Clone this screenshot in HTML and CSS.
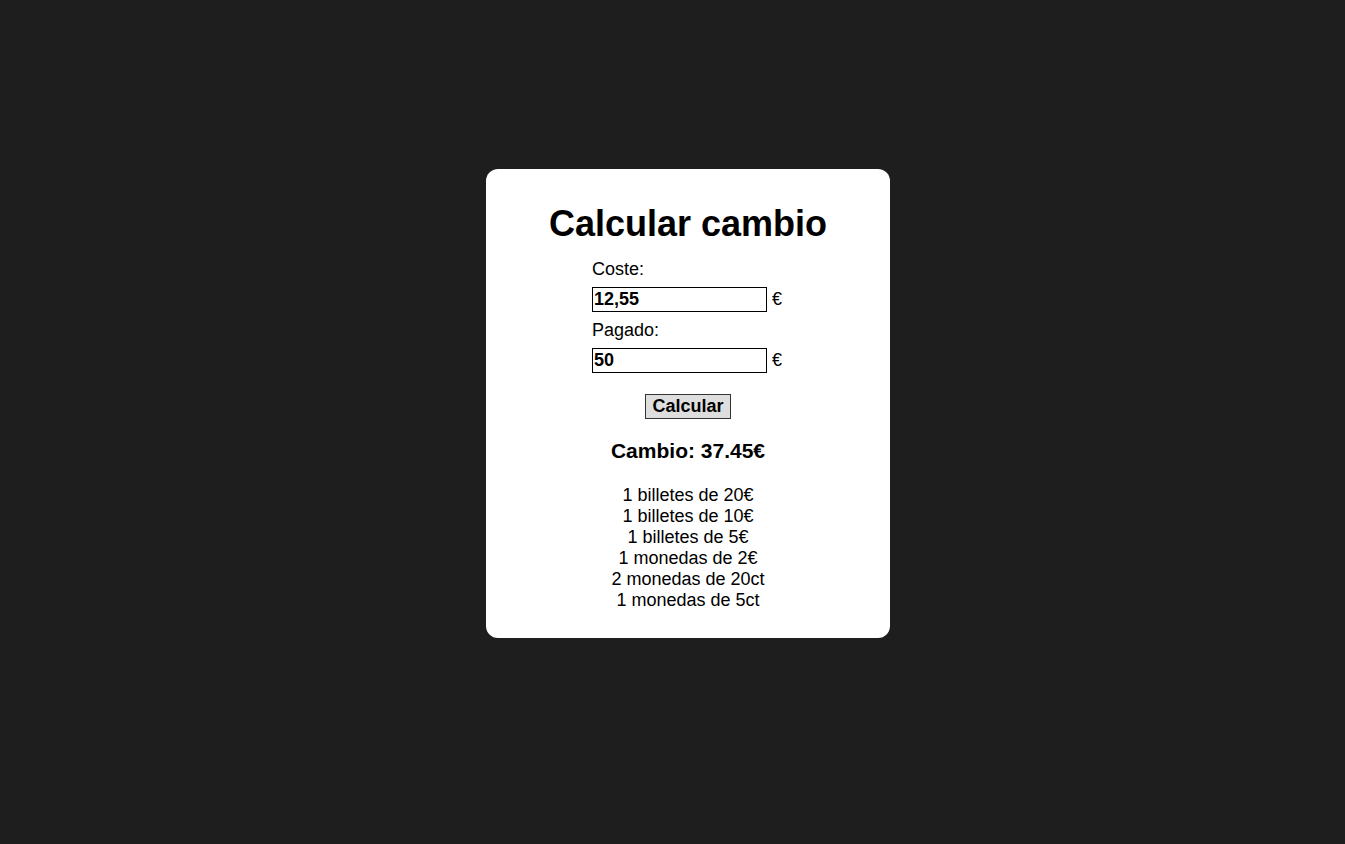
FILE: index.html
```html
<!DOCTYPE html>
<html lang="es">
<head>
<meta charset="utf-8">
<title>Calcular cambio</title>
<link rel="stylesheet" href="styles.css">
</head>
<body>
<main class="card">
  <h1 class="title">Calcular cambio</h1>
  <form class="form">
    <label class="label" for="coste">Coste:</label>
    <div class="field field-first"><input class="input" id="coste" type="text" value="12,55"> €</div>
    <label class="label label-second" for="pagado">Pagado:</label>
    <div class="field field-second"><input class="input" id="pagado" type="text" value="50"> €</div>
  </form>
  <button class="button" type="button">Calcular</button>
  <h3 class="result">Cambio: 37.45€</h3>
  <div class="list">
    <div>1 billetes de 20€</div>
    <div>1 billetes de 10€</div>
    <div>1 billetes de 5€</div>
    <div>1 monedas de 2€</div>
    <div>2 monedas de 20ct</div>
    <div>1 monedas de 5ct</div>
  </div>
</main>
</body>
</html>
```
FILE: styles.css
```css
html, body {
  margin: 0;
  padding: 0;
}
body {
  background: #1e1e1e;
  font-family: "Liberation Sans", Arial, sans-serif;
  font-size: 18px;
  color: #000;
  display: flex;
  flex-direction: column;
  align-items: center;
  padding-top: 169px;
  min-height: 844px;
  box-sizing: border-box;
}
.card {
  width: 404px;
  box-sizing: border-box;
  background: #fff;
  border-radius: 12px;
  padding: 34px 0 27px;
  display: flex;
  flex-direction: column;
  align-items: center;
  margin-left: 31px;
}
.title {
  margin: 0;
  font-size: 36px;
  font-weight: bold;
  line-height: 41px;
  text-align: center;
}
.form {
  margin: 15px 0 0;
  display: flex;
  flex-direction: column;
  align-items: flex-start;
  width: 192px;
}
.label {
  line-height: 21px;
  height: 21px;
}
.label-second {
  margin-top: 8px;
}
.field {
  height: 25px;
  line-height: 25px;
  display: flex;
  align-items: center;
  gap: 5px;
}
.field-first {
  margin-top: 7px;
}
.field-second {
  margin-top: 7px;
}
.input {
  width: 175px;
  height: 25px;
  box-sizing: border-box;
  border: 1px solid #000;
  padding: 0 0 0 1px;
  margin: 0;
  font-family: "Liberation Sans", Arial, sans-serif;
  font-size: 18px;
  font-weight: bold;
  color: #000;
  background: #fff;
  outline: none;
}
.button {
  margin-top: 21px;
  height: 25px;
  width: 86px;
  box-sizing: border-box;
  padding: 0;
  border: 1px solid #333;
  background: #dedede;
  font-family: "Liberation Sans", Arial, sans-serif;
  font-size: 18px;
  font-weight: bold;
  color: #000;
  border-radius: 0;
}
.result {
  margin: 20px 0 0;
  font-size: 21px;
  font-weight: bold;
  line-height: 24px;
  text-align: center;
}
.list {
  margin-top: 22px;
  line-height: 21px;
  text-align: center;
}
```
